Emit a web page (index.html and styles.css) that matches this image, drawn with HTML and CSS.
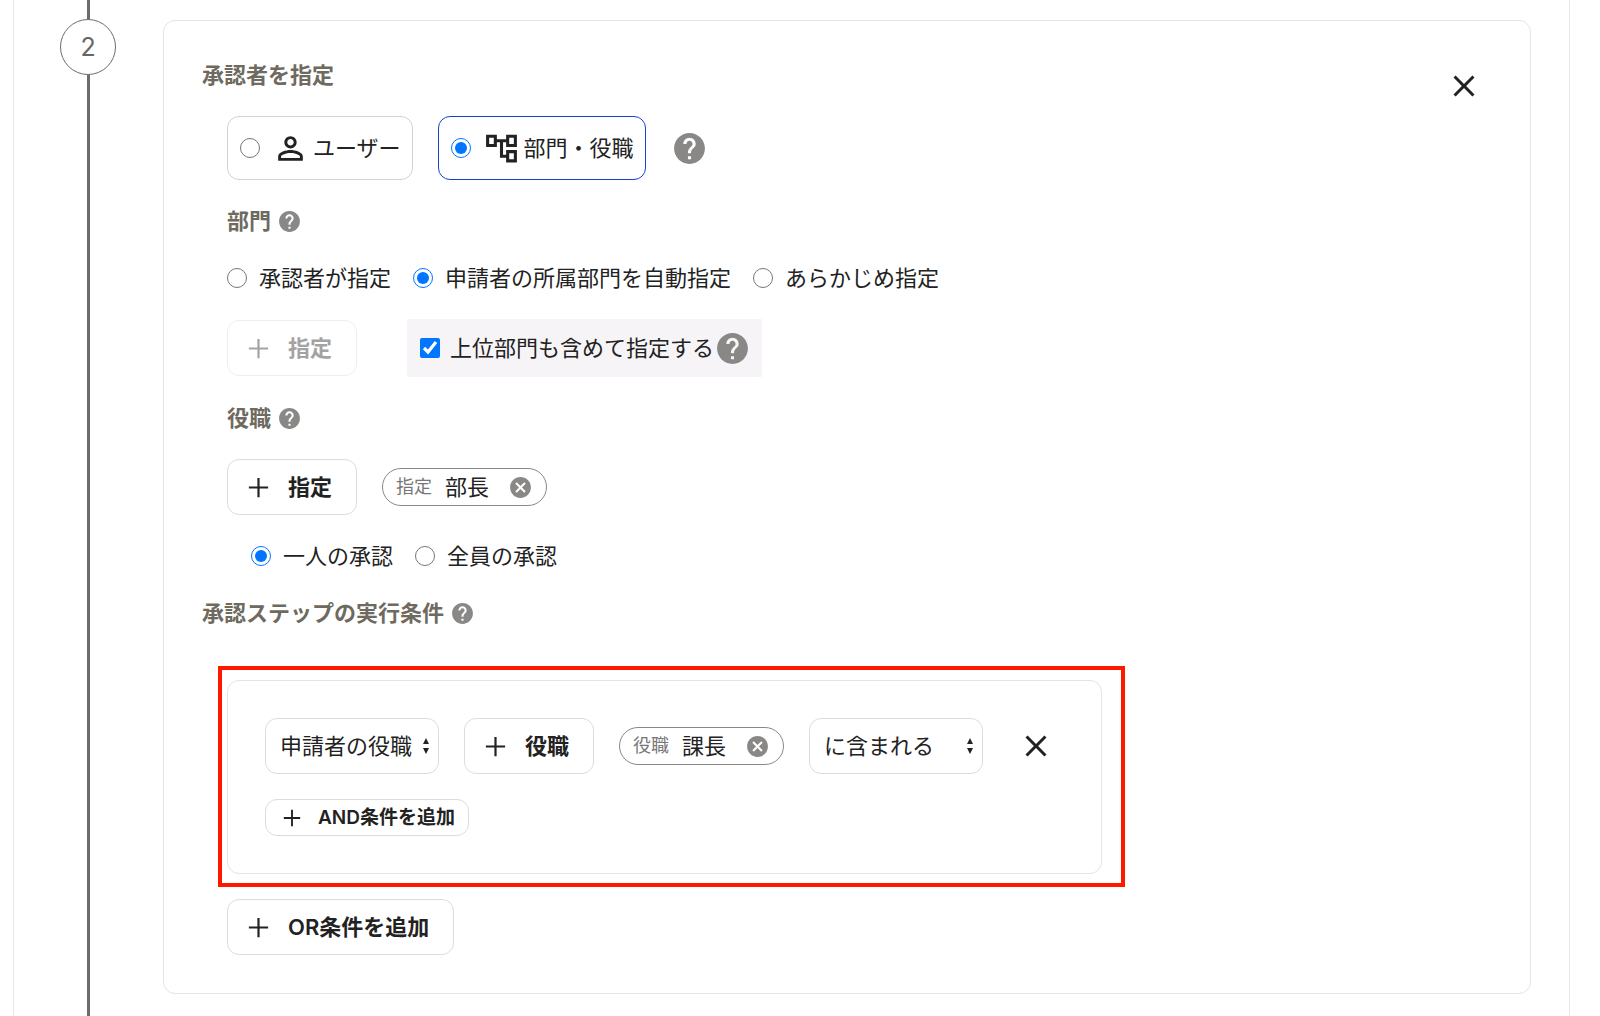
FILE: index.html
```
<!DOCTYPE html>
<html lang="ja">
<head>
    <meta charset="UTF-8">
    <meta name="viewport" content="width=device-width, initial-scale=1.0">
    <title>承認ステップ</title>
    <link rel="stylesheet" href="styles.css">
</head>
<body>
    <svg class="sprite" aria-hidden="true">
        <symbol id="help" viewBox="0 0 24 24"><path d="M12 2C6.48 2 2 6.48 2 12s4.48 10 10 10 10-4.48 10-10S17.52 2 12 2zm1 17h-2v-2h2v2zm2.07-7.75l-.9.92C13.45 12.9 13 13.5 13 15h-2v-.5c0-1.1.45-2.1 1.17-2.83l1.24-1.26c.37-.36.59-.86.59-1.41 0-1.1-.9-2-2-2s-2 .9-2 2H8c0-2.21 1.79-4 4-4s4 1.79 4 4c0 .88-.36 1.68-.93 2.25z"/></symbol>
        <symbol id="add" viewBox="0 0 24 24"><path d="M19 12.8h-6.2V19h-1.6v-6.2H5v-1.6h6.2V5h1.6v6.2H19z"/></symbol>
        <symbol id="close" viewBox="0 0 24 24"><path d="M19 6.41L17.59 5 12 10.59 6.41 5 5 6.41 10.59 12 5 17.59 6.41 19 12 13.41 17.59 19 19 17.59 13.41 12z"/></symbol>
        <symbol id="cancel" viewBox="0 0 24 24"><path d="M12 2C6.47 2 2 6.47 2 12s4.47 10 10 10 10-4.47 10-10S17.53 2 12 2zm5 13.59L15.59 17 12 13.41 8.41 17 7 15.59 10.59 12 7 8.41 8.41 7 12 10.59 15.59 7 17 8.41 13.41 12 17 15.59z"/></symbol>
        <symbol id="person" viewBox="0 0 24 24"><path d="M12 5.9c1.16 0 2.1.94 2.1 2.1s-.94 2.1-2.1 2.1S9.9 9.16 9.9 8s.94-2.1 2.1-2.1m0 9c2.97 0 6.1 1.46 6.1 2.1v1.1H5.9V17c0-.64 3.13-2.1 6.1-2.1M12 4C9.79 4 8 5.79 8 8s1.79 4 4 4 4-1.79 4-4-1.79-4-4-4zm0 9c-2.67 0-8 1.34-8 4v3h16v-3c0-2.66-5.33-4-8-4z"/></symbol>
        <symbol id="tree" viewBox="0 0 24 24"><path d="M22 11V3h-7v3H9V3H2v8h7V8h2v10h4v3h7v-8h-7v3h-2V8h2v3h7zM7 9H4V5h3v4zm10 6h3v4h-3v-4zm0-10h3v4h-3V5z"/></symbol>
        <symbol id="updown" viewBox="0 0 8 16"><path d="M4 0l3 6H1zM4 16l3-6H1z"/></symbol>
    </svg>

    <main class="frame">
        <div class="timeline">
            <span class="line-top"></span>
            <span class="step-number">2</span>
            <span class="line"></span>
        </div>

        <section class="card">
            <button type="button" class="close card-close" aria-label="ステップを削除"><svg><use href="#close"/></svg></button>

            <h2 class="title">承認者を指定</h2>
            <div class="row indent">
                <label class="option"><input type="radio" name="approver"><svg><use href="#person"/></svg><span>ユーザー</span></label>
                <label class="option selected"><input type="radio" name="approver" checked><svg><use href="#tree"/></svg><span>部門・役職</span></label>
                <button type="button" class="help large" aria-label="ヘルプ"><svg><use href="#help"/></svg></button>
            </div>

            <h3 class="title indent">部門<button type="button" class="help" aria-label="部門のヘルプ"><svg><use href="#help"/></svg></button></h3>
            <div class="radios indent">
                <label><input type="radio" name="department">承認者が指定</label>
                <label><input type="radio" name="department" checked>申請者の所属部門を自動指定</label>
                <label><input type="radio" name="department">あらかじめ指定</label>
            </div>
            <div class="row wide indent">
                <button type="button" class="add" disabled><svg><use href="#add"/></svg>指定</button>
                <div class="parent-check">
                    <label><input type="checkbox" checked>上位部門も含めて指定する</label>
                    <button type="button" class="help large" aria-label="上位部門のヘルプ"><svg><use href="#help"/></svg></button>
                </div>
            </div>

            <h3 class="title indent">役職<button type="button" class="help" aria-label="役職のヘルプ"><svg><use href="#help"/></svg></button></h3>
            <div class="row indent">
                <button type="button" class="add"><svg><use href="#add"/></svg>指定</button>
                <div class="chip"><small>指定</small><span>部長</span><button type="button" aria-label="部長を外す"><svg><use href="#cancel"/></svg></button></div>
            </div>
            <div class="radios indent-more">
                <label><input type="radio" name="approval" checked>一人の承認</label>
                <label><input type="radio" name="approval">全員の承認</label>
            </div>

            <h2 class="title">承認ステップの実行条件<button type="button" class="help" aria-label="実行条件のヘルプ"><svg><use href="#help"/></svg></button></h2>
            <div class="conditions">
                <div class="highlight">
                    <div class="condition-box">
                        <div class="row">
                            <div class="select">
                                <select aria-label="条件の対象"><option>申請者の役職</option></select>
                                <svg><use href="#updown"/></svg>
                            </div>
                            <button type="button" class="add"><svg><use href="#add"/></svg>役職</button>
                            <div class="chip"><small>役職</small><span>課長</span><button type="button" aria-label="課長を外す"><svg><use href="#cancel"/></svg></button></div>
                            <div class="select">
                                <select aria-label="条件の比較"><option>に含まれる</option></select>
                                <svg><use href="#updown"/></svg>
                            </div>
                            <button type="button" class="close" aria-label="条件を削除"><svg><use href="#close"/></svg></button>
                        </div>
                        <button type="button" class="add small"><svg><use href="#add"/></svg>AND条件を追加</button>
                    </div>
                </div>
                <button type="button" class="add or-button"><svg><use href="#add"/></svg>OR条件を追加</button>
            </div>
        </section>
    </main>
</body>
</html>
```
FILE: styles.css
```
* {
    box-sizing: border-box;
}
body {
    margin: 0;
    background-color: #fff;
    color: #222;
    font-family: Inter, "Noto Sans CJK JP", sans-serif;
    font-size: 22px;
    line-height: 32px;
}
button, select, input {
    margin: 0;
    font: inherit;
    color: inherit;
}
button {
    padding: 0;
    border: none;
    background: none;
    cursor: pointer;
}
svg {
    display: block;
    flex: none;
    fill: currentColor;
}
.sprite {
    position: absolute;
    width: 0;
    height: 0;
}
.frame {
    display: flex;
    gap: 47px;
    min-height: 100vh;
    margin: 0 30px 0 13px;
    padding: 0 38px 0 46px;
    border-left: 1px solid #e8e8e8;
    border-right: 1px solid #e8e8e8;
}

/* timeline */
.timeline {
    display: flex;
    flex-direction: column;
    align-items: center;
    width: 56px;
    flex: none;
}
.line-top, .line {
    width: 3px;
    background-color: #6f6b6b;
}
.line-top {
    height: 19px;
}
.line {
    flex: 1;
}
.step-number {
    display: flex;
    justify-content: center;
    align-items: center;
    width: 56px;
    height: 56px;
    border: 1px solid #6f6b6b;
    border-radius: 50%;
    color: #666;
    font-size: 25px;
}

/* card */
.card {
    position: relative;
    flex: 1;
    display: flex;
    flex-direction: column;
    align-items: flex-start;
    gap: 25px;
    margin: 20px 0 22px;
    padding: 38px 38px 37px;
    border: 1px solid #e4e4e4;
    border-radius: 12px;
}
.card-close {
    position: absolute;
    top: 37px;
    right: 38px;
}
.title {
    display: flex;
    align-items: center;
    gap: 6px;
    margin: 0;
    color: #6e6a60;
    font-size: 22px;
    font-weight: 700;
}
.indent {
    margin-left: 25px;
}
.indent-more {
    margin-left: 49px;
}
.row {
    display: flex;
    align-items: center;
    gap: 25px;
}
.row.wide {
    gap: 50px;
}
input {
    width: 20px;
    height: 20px;
    accent-color: #0075ff;
}

/* controls */
.option {
    display: flex;
    align-items: center;
    height: 64px;
    padding: 0 11px 0 12px;
    border: 1px solid #d5d1d1;
    border-radius: 12px;
}
.option.selected {
    border-color: #1443cc;
}
.option svg {
    width: 37px;
    height: 37px;
    margin: 0 4px 0 12px;
}
.help {
    color: #8a8886;
}
.help svg {
    width: 25px;
    height: 25px;
}
.help.large svg {
    width: 37px;
    height: 37px;
}
.radios {
    display: flex;
    gap: 22px;
}
.radios label, .parent-check label {
    display: flex;
    align-items: center;
    gap: 12px;
}
.parent-check {
    display: flex;
    align-items: center;
    height: 58px;
    padding: 0 11px 0 13px;
    background-color: #f6f4f6;
}
.parent-check label {
    gap: 10px;
}
.add {
    display: flex;
    align-items: center;
    gap: 13px;
    height: 56px;
    padding: 0 24px 0 14px;
    border: 1px solid #dcdcdc;
    border-radius: 12px;
    font-weight: 600;
}
.add svg {
    width: 33px;
    height: 33px;
}
.add:disabled {
    border-color: #eee;
    color: #a3a3a3;
    cursor: default;
}
.add.small {
    gap: 12px;
    height: 37px;
    padding: 0 13px 0 12px;
    font-size: 19px;
}
.add.small svg {
    width: 28px;
    height: 28px;
}
.chip {
    display: flex;
    align-items: center;
    height: 38px;
    padding: 0 13px;
    border: 1px solid #8a8886;
    border-radius: 19px;
}
.chip small {
    margin-right: 13px;
    color: #777;
    font-size: 18px;
}
.chip button {
    margin-left: 19px;
    color: #8a8886;
}
.chip svg {
    width: 25px;
    height: 25px;
}
.select {
    position: relative;
}
.select select {
    display: block;
    width: 174px;
    height: 56px;
    padding: 0 14px;
    border: 1px solid #dcdcdc;
    border-radius: 12px;
    background-color: #fff;
    appearance: none;
}
.select svg {
    position: absolute;
    top: 20px;
    right: 9px;
    width: 8px;
    height: 16px;
    pointer-events: none;
}
.close {
    display: flex;
    justify-content: center;
    align-items: center;
    width: 56px;
    height: 56px;
}
.close svg {
    width: 36px;
    height: 36px;
}

/* conditions */
.conditions {
    display: flex;
    flex-direction: column;
    align-items: flex-start;
    gap: 12px;
    margin: 12px 0 0 16px;
}
.highlight {
    padding: 10px 19px 9px 5px;
    border: 4px solid #ff1800;
}
.condition-box {
    display: flex;
    flex-direction: column;
    align-items: flex-start;
    gap: 25px;
    padding: 37px;
    border: 1px solid #e4e4e4;
    border-radius: 12px;
}
.or-button {
    margin-left: 9px;
}
```
